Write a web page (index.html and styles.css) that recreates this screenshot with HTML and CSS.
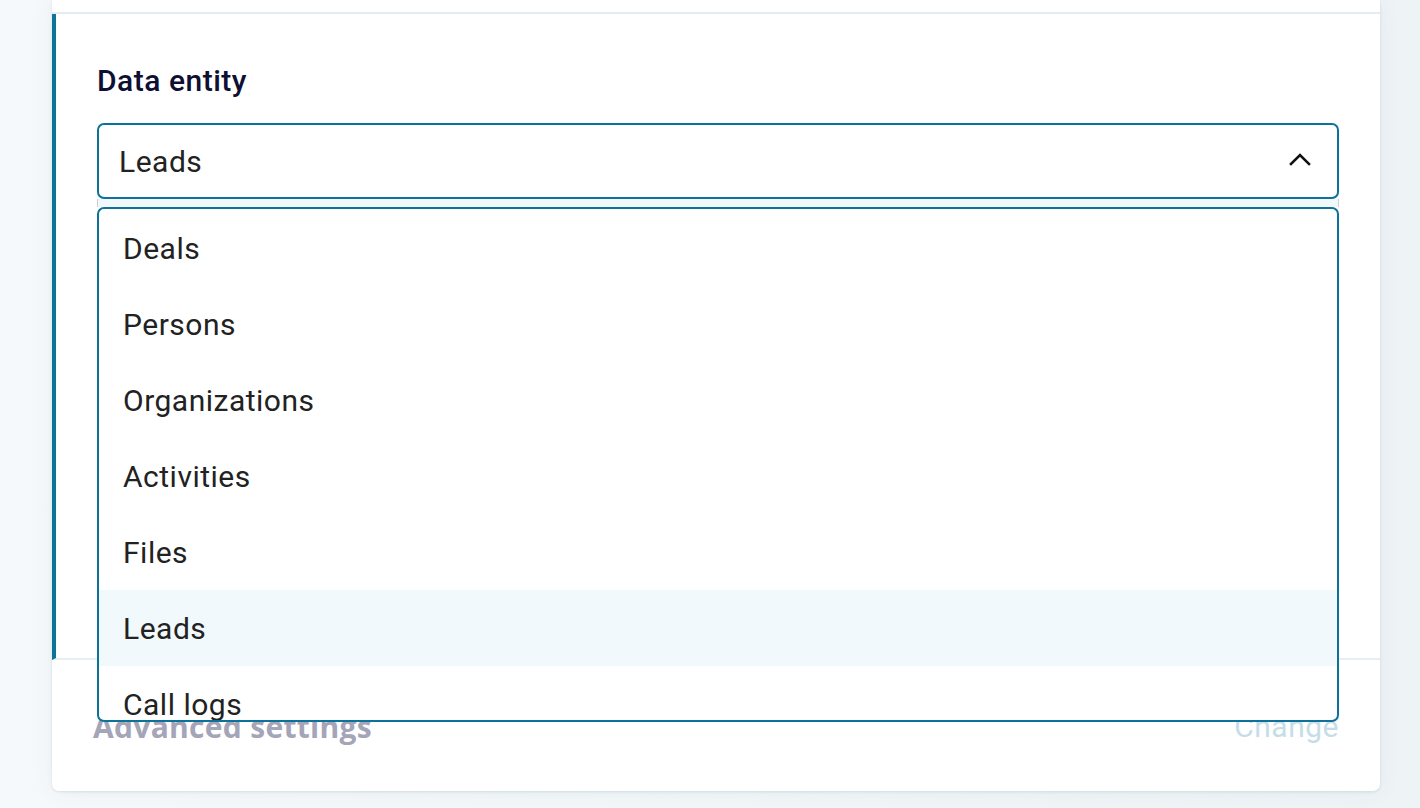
FILE: index.html
```html
<!DOCTYPE html>
<html>
<head>
<meta charset="utf-8">
<link rel="stylesheet" href="styles.css">
</head>
<body>
<div class="card">
  <div class="prev"></div>
  <div class="section">
    <div class="label">Data entity</div>
    <div class="select-wrap">
      <div class="select">
        <span class="value">Leads</span>
        <svg class="chev" width="22" height="14" viewBox="0 0 22 14"><path d="M2 12 L11 3 L20 12" fill="none" stroke="#111" stroke-width="2.6" stroke-linecap="square"/></svg>
      </div>
      <div class="gap-strip"></div>
      <div class="menu">
        <div class="opt">Deals</div>
        <div class="opt">Persons</div>
        <div class="opt">Organizations</div>
        <div class="opt">Activities</div>
        <div class="opt">Files</div>
        <div class="opt active">Leads</div>
        <div class="opt">Call logs</div>
        <div class="opt">Notes</div>
      </div>
    </div>
  </div>
  <div class="adv">
    <span class="adv-title">Advanced settings</span>
    <span class="adv-change">Change</span>
  </div>
</div>
</body>
</html>
```
FILE: styles.css
```css
html, body {
  margin: 0;
  padding: 0;
}
body {
  width: 1420px;
  height: 808px;
  overflow: hidden;
  background: linear-gradient(90deg, #f6f9fb 0%, #eef3f6 100%);
  font-family: Roboto, "Liberation Sans", sans-serif;
}
.card {
  margin-left: 52px;
  width: 1328px;
  height: 791px;
  background: #fff;
  border-radius: 0 0 7px 7px;
  box-shadow: 0 1px 3px rgba(30, 70, 100, 0.12), 0 0 24px rgba(30, 80, 110, 0.06);
  display: flex;
  flex-direction: column;
}
.prev {
  height: 12px;
  border-bottom: 2px solid #e6ebef;
}
.section {
  height: 646px;
  border-left: 4px solid #0e7399;
  border-bottom: 2px solid #e8edf1;
  padding: 0 41px;
  box-sizing: border-box;
}
.label {
  margin-top: 47px;
  height: 40px;
  font-size: 30px;
  line-height: 40px;
  font-weight: 500;
  color: #0d0f33;
  letter-spacing: 0.5px;
}
.select-wrap {
  position: relative;
  margin-top: 22px;
}
.select {
  height: 76px;
  box-sizing: border-box;
  border: 2px solid #0c7299;
  border-radius: 7px;
  display: flex;
  align-items: center;
  justify-content: space-between;
  padding: 0 26px 0 20px;
}
.value {
  font-size: 30px;
  letter-spacing: 0.5px;
  color: #222;
}
.chev {
  margin-top: -4px;
}
.gap-strip {
  height: 8px;
  background: #f0f8fc;
  border-left: 1px solid #c9cfd3;
  border-right: 1px solid #c9cfd3;
}
.menu {
  position: absolute;
  top: 84px;
  left: 0;
  right: 0;
  height: 515px;
  box-sizing: border-box;
  overflow: hidden;
  background: #fff;
  border: 2px solid #0c7299;
  border-radius: 7px;
  z-index: 5;
  padding-top: 1px;
}
.opt {
  height: 76px;
  display: flex;
  align-items: center;
  padding-left: 24px;
  font-size: 30px;
  letter-spacing: 0.5px;
  color: #222;
}
.opt.active {
  background: #f1f9fc;
}
.adv {
  flex: 1;
  display: flex;
  justify-content: space-between;
  align-items: center;
  padding: 0 41px;
}
.adv-title {
  font-family: "Open Sans", Lato, sans-serif;
  font-weight: 700;
  font-size: 30px;
  letter-spacing: 0.3px;
  color: #a4a5b8;
  margin-top: 2px;
}
.adv-change {
  font-size: 30px;
  letter-spacing: 0.5px;
  color: #c6dde8;
  margin-top: 2px;
}
```
